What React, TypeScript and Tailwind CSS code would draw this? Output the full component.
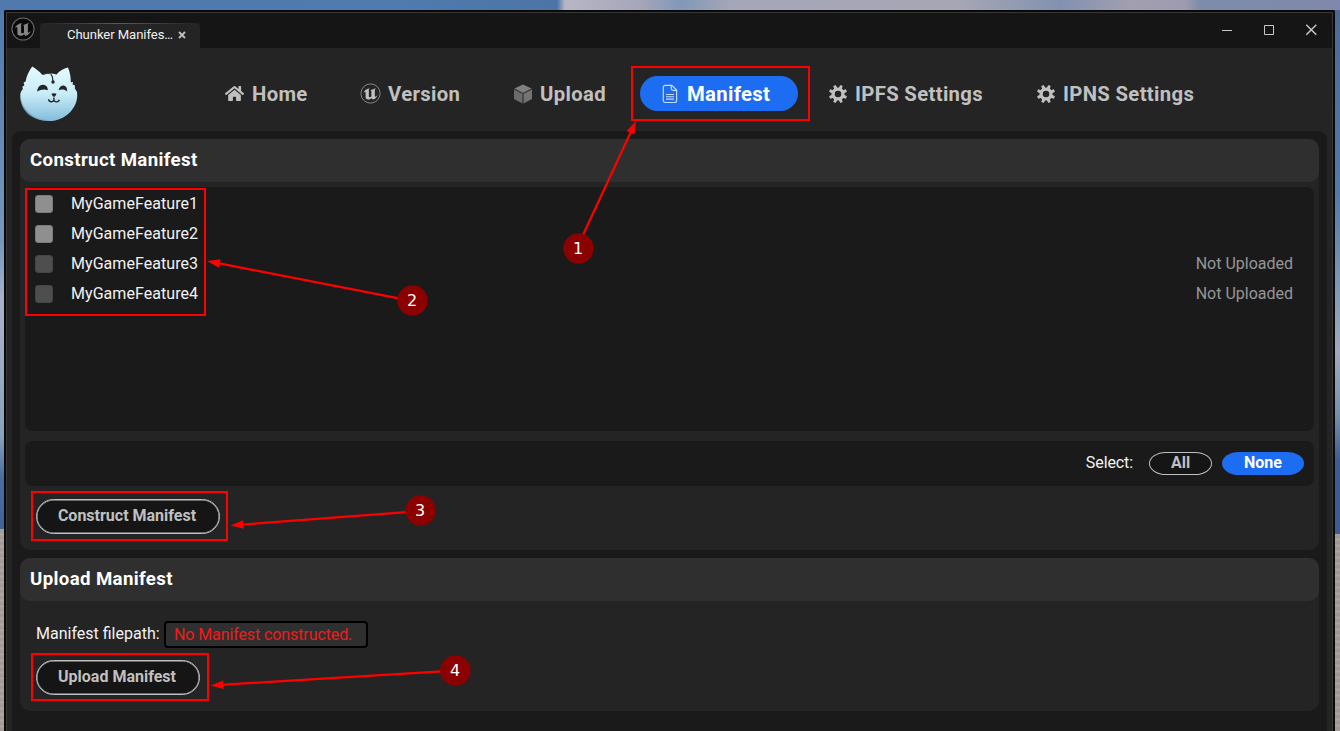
import type { ReactNode } from 'react';
import { FaHome } from 'react-icons/fa';

function EngineLogo({ size, dim }: { size: number; dim?: boolean }) {
  const c = dim ? '#858585' : '#c0c0c0';
  return (
    <svg width={size} height={size} viewBox="0 0 24 24" fill="none">
      <circle cx="12" cy="12" r="11" fill={dim ? '#080808' : 'none'} stroke={dim ? '#686868' : '#888888'} strokeWidth="1.1" />
      <path
        d="M3.8 11.6C4.8 8.8 7 6.9 10.8 6.1C10.3 6.7 10.1 7.2 10.1 7.9V15C10.1 15.8 10.4 16.3 11.1 16.3C11.7 16.3 12.4 16 13 15.4V9L12.1 8C14.4 7.6 16.4 6.8 18.2 5.6C17.4 6.6 16.9 7.3 16.9 8.2V14.7C16.9 15.5 17.2 15.8 17.8 15.6C18.7 15.3 19.4 14.6 20.2 13.6C19.2 16.3 17.4 18 14.8 18.9L13 17.3C11.8 18.5 10.7 18.9 9.4 18.8C7.4 18.6 6.2 17.6 6.4 16.2V10.9C6.4 10.1 6 9.9 5.3 10.2C4.8 10.5 4.2 11 3.8 11.6Z"
        fill={c}
      />
    </svg>
  );
}

function CatLogo() {
  return (
    <svg width="60" height="57" viewBox="0 0 60 57">
      <defs>
        <linearGradient id="fur" x1="0" y1="0" x2="0" y2="1">
          <stop offset="0" stopColor="#e6faff" />
          <stop offset="0.5" stopColor="#c8ecf7" />
          <stop offset="1" stopColor="#84bcdc" />
        </linearGradient>
      </defs>
      <path
        d="M13.2 1.5C17 3.5 20.5 6.5 23.5 10Q30.5 7.5 37.5 9.5C40.5 6 44.5 3.5 49 2.5C51.2 7.5 51.8 12.5 51.8 17.2L54 17L53.6 19.5L56 20.4L55.8 23.2L58 27C60.2 41 47.5 56 30.5 56C13 56 1 44 1.3 30C1.4 27.5 2 26 3.8 24.2L3.4 21.5L5.4 20.5L4.6 17.4L6.6 16.5C7.2 11.5 10 6 13.2 1.5Z"
        fill="url(#fur)"
      />
      <path d="M1.5 30C3 45 15 54.5 33 55.4C13 58 0 45 1.5 30Z" fill="#79aecb" opacity=".65" />
      <g fill="#202629">
        <path d="M18.2 26.6C18.4 22.4 21 19.6 24.2 19.8C27 20 28.8 22 28.9 25.2C25.6 23.8 21.6 24.2 18.2 26.6Z" />
        <path d="M39.6 25.2C40.2 22.2 42.4 20.3 44.8 20.6C47.2 21 48.2 23.2 48.2 26.4C45.6 24.4 42.6 24.2 39.6 25.2Z" />
        <path d="M32.4 28.8Q35 27.8 37.6 28.8Q36.6 31.4 35 32Q33.2 31.2 32.4 28.8Z" />
        <circle cx="34" cy="17" r="1.7" />
      </g>
      <path d="M32 9.2L33.4 12L34 17" fill="none" stroke="#252b2e" strokeWidth="1.2" />
      <path d="M24.5 9.1Q28 8.2 32 8.7" fill="none" stroke="#333b3e" strokeWidth=".8" />
      <path d="M29.4 34.4Q31.2 38.6 34.8 35.4Q38.4 38.6 40.4 34.8M34.9 32.6V35.4" fill="none" stroke="#202629" strokeWidth="1.4" />
    </svg>
  );
}

function CubeIcon() {
  return (
    <svg width="20" height="20" viewBox="0 0 20 20">
      <path d="M10 .5L18.5 4.5L10 8.9L1.5 4.5Z" fill="#808080" />
      <path d="M1 5.4L9.5 9.8V19.5L1 15Z" fill="#6c6c6c" />
      <path d="M19 5.4L10.5 9.8V19.5L19 15Z" fill="#747474" />
      <path d="M1 5L10 9.5L19 5M10 9.5V19.5" stroke="#484848" strokeWidth=".7" fill="none" />
    </svg>
  );
}

function DocumentIcon() {
  return (
    <svg width="16" height="20" viewBox="0 0 16 20" fill="none" stroke="#c8d9fb" strokeWidth="1.2">
      <path d="M3.3 1.3H9.8L14.6 6.1V16.5A2 2 0 0 1 12.6 18.5H3.3A2 2 0 0 1 1.3 16.5V3.3A2 2 0 0 1 3.3 1.3Z" />
      <path d="M9.3 1.5V4.6A1.8 1.8 0 0 0 11.1 6.4H14.4" />
      <path d="M4 10.5H12M4 12.8H12M4 15.1H12" strokeWidth="1.1" />
    </svg>
  );
}

function GearIcon() {
  return (
    <svg width="18" height="18" viewBox="0 0 18 18" fill="none" stroke="#c0c0c0">
      <circle cx="9" cy="9" r="4.9" strokeWidth="3.3" />
      {[22.5, 67.5, 112.5, 157.5, 202.5, 247.5, 292.5, 337.5].map((a) => (
        <path key={a} d="M7.3 3.4L7.7 -.1H10.3L10.7 3.4Z" fill="#c0c0c0" stroke="none" transform={`rotate(${a} 9 9)`} />
      ))}
    </svg>
  );
}

function NavItem({ icon, label, className }: { icon: ReactNode; label: string; className: string }) {
  return (
    <div className={`flex h-[35px] shrink-0 items-center whitespace-nowrap text-[20.3px] font-bold tracking-[0.34px] ${className}`}>
      <span className="flex w-[27px] shrink-0 items-center">{icon}</span>
      <div className="pt-[2px]">{label}</div>
    </div>
  );
}

function SectionTitle({ children }: { children: ReactNode }) {
  return (
    <h2 className="flex h-[43px] items-center rounded-[10px] bg-[#2f2f2f] px-[10px] pb-[2px] text-[18.67px] font-bold tracking-[0.36px] text-white">
      {children}
    </h2>
  );
}

function FeatureRow({ name, ready }: { name: string; ready: boolean }) {
  return (
    <div className="flex h-[30px] items-center pr-[21px] pl-[10px] text-base">
      <span
        className={`size-[18px] rounded-[3px] border ${
          ready ? 'border-[#7b7b7b] bg-[#8f8f8f]' : 'border-[#444444] bg-[#4e4e4e]'
        }`}
      />
      <span className="ml-[18px] pb-px tracking-[0.05px] text-[#f2f2f2]">{name}</span>
      {!ready && <span className="ml-auto pb-px text-[#969696]">Not Uploaded</span>}
    </div>
  );
}

const steps = [
  { n: 1, x: 578.5, y: 248.5, sx: 577, sy: 248, tx: 636, ty: 121 },
  { n: 2, x: 412.5, y: 300.5, sx: 412.5, sy: 301, tx: 207, ty: 261 },
  { n: 3, x: 420.5, y: 510.5, sx: 420.5, sy: 511, tx: 230.5, ty: 525.5 },
  { n: 4, x: 455.5, y: 670.5, sx: 455.5, sy: 670.5, tx: 210.5, ty: 685.5 },
];

function Annotations() {
  return (
    <div className="pointer-events-none absolute inset-0">
      <div className="absolute top-[66px] left-[631px] h-[55px] w-[179px] border-2 border-[#ff0000]" />
      <div className="absolute top-[188px] left-[25px] h-[128px] w-[181px] border-2 border-[#ff0000]" />
      <div className="absolute top-[491px] left-[31px] h-[50px] w-[197px] border-2 border-[#ff0000]" />
      <div className="absolute top-[653px] left-[31px] h-[48px] w-[178px] border-2 border-[#ff0000]" />
      <svg className="absolute inset-0" width="1340" height="731">
        {steps.map((s) => {
          const angle = (Math.atan2(s.ty - s.sy, s.tx - s.sx) * 180) / Math.PI;
          const length = Math.hypot(s.tx - s.sx, s.ty - s.sy);
          return (
            <g key={s.n} transform={`translate(${s.sx} ${s.sy}) rotate(${angle})`}>
              <path d={`M14 0H${length - 10}`} stroke="#ff0000" strokeWidth="2.2" />
              <path d={`M${length} 0l-13 -4.3v8.6z`} fill="#ff0000" />
            </g>
          );
        })}
        {steps.map((s) => (
          <g key={s.n}>
            <circle cx={s.x} cy={s.y} r="15.2" fill="#8b0000" />
            <text x={s.x - 0.5} y={s.y + 5.5} textAnchor="middle" fill="#ffffff" className="font-['DejaVu_Sans',sans-serif] text-[16px]">
              {s.n}
            </text>
          </g>
        ))}
      </svg>
    </div>
  );
}

export default function App() {
  return (
    <div className="relative h-[731px] w-[1340px] overflow-hidden bg-[linear-gradient(90deg,#5079ad_0px,#4f7bae_400px,#4d74a6_557px,#b7b6c5_565px,#a6a6ba_640px,#8198b8_680px,#a5a6b8_730px,#a7a6b5_960px,#8192b0_1060px,#a29fb0_1130px,#9e9bb0_1185px,#7d8cab_1200px,#8089a9_1340px)] pt-[10px] font-[Roboto,sans-serif]">
      <div className="absolute top-[10px] left-0 h-[519px] w-[5px] bg-[linear-gradient(#5179ad_0%,#7897bb_45%,#aab2c9_56%,#8ba2bb_82%,#496e9e_90%,#426394_100%)]" />
      <div className="absolute top-[10px] right-0 h-[524px] w-[6px] bg-[linear-gradient(#4c6995_0%,#507ba8_35%,#9faabd_65%,#7690ad_77%,#3c5d92_86%,#3c5d92_100%)]" />
      <div className="absolute top-[529px] left-0 h-[202px] w-[5px] bg-[repeating-linear-gradient(#aaa29f_0px,#a09896_3px,#b1aaa6_6px)]" />
      <div className="absolute top-[534px] right-0 h-[197px] w-[6px] bg-[repeating-linear-gradient(#a89f9b_0px,#9a9390_3px,#b0a8a4_6px)]" />

      <div className="relative ml-1 h-[721px] w-[1331px] rounded-t-[2px] border-x-2 border-t-2 border-[#090909]">
        <div className="h-full border-x border-t border-[#373737] bg-[#242424]">
          <div className="flex h-[35px] bg-[#151515]">
            <div className="flex w-[33px] items-start pt-1 pl-1">
              <EngineLogo size={24} dim />
            </div>
            <div className="relative mt-[10px] flex w-[160px] items-center rounded-t-[4px] bg-[#242424] pl-[27px] text-[13.1px] text-[#f0f0f0]">
              <span className="absolute top-0 left-1 h-px w-[152px] bg-[linear-gradient(90deg,transparent,#0070e0_50%,transparent)]" />
              <span className="w-[106px] whitespace-nowrap pb-[2px] tracking-[-0.07px]">Chunker Manifes…</span>
              <svg className="mt-[-2px] ml-[5px]" width="8" height="8" viewBox="0 0 8 8" stroke="#c0c0c0" strokeWidth="1.8">
                <path d="M1 1L7 7M7 1L1 7" />
              </svg>
            </div>
            <div className="mr-[14px] mb-[2px] ml-auto flex items-center gap-[31px]">
              <svg width="11" height="11" stroke="#c8c8c8"><path d="M0 6.5H10" /></svg>
              <svg width="11" height="11" fill="none" stroke="#c8c8c8"><path d="M.5 1.5H9.5V10.5H.5Z" /></svg>
              <svg width="12" height="12" stroke="#c8c8c8" strokeWidth="1.4"><path d="M.3 .8L10.3 10.8M10.3 .8L.3 10.8" /></svg>
            </div>
          </div>

          <nav className="flex h-[83px] items-start pt-[28px] pl-3 text-[#c0c0c0]">
            <div className="-mt-[11px] w-[206px] shrink-0">
              <CatLogo />
            </div>
            <NavItem className="w-[135px]" icon={<FaHome size={19} />} label="Home" />
            <NavItem className="w-[153px] [&>span]:w-[28px]" icon={<EngineLogo size={21} />} label="Version" />
            <NavItem className="w-[127px]" icon={<CubeIcon />} label="Upload" />
            <NavItem className="w-[158px] rounded-full bg-[#1c6df2] pl-[22px] text-white [&>span]:w-[25px]" icon={<DocumentIcon />} label="Manifest" />
            <NavItem className="ml-[31px] w-[208px] [&>span]:w-[26px]" icon={<GearIcon />} label="IPFS Settings" />
            <NavItem className="[&>span]:w-[26px]" icon={<GearIcon />} label="IPNS Settings" />
          </nav>

          <main className="mr-[5px] ml-[5px] flex h-[600px] flex-col gap-2 rounded-t-[9px] bg-[#1a1a1a] p-2">
            <section className="h-[411px] rounded-[10px] bg-[#242424]">
              <SectionTitle>Construct Manifest</SectionTitle>
              <div className="mx-[5px] mt-[5px] h-[244px] rounded-[8px] bg-[#1a1a1a] pt-[2px]">
                <FeatureRow name="MyGameFeature1" ready />
                <FeatureRow name="MyGameFeature2" ready />
                <FeatureRow name="MyGameFeature3" ready={false} />
                <FeatureRow name="MyGameFeature4" ready={false} />
              </div>
              <div className="mx-[5px] mt-[10px] flex h-[45px] items-center justify-end rounded-[8px] bg-[#1a1a1a] pr-[10px] text-base text-[#f2f2f2]">
                <span className="pb-[2px] tracking-[-0.1px]">Select:</span>
                <button className="-mt-px ml-4 h-[23px] w-[63px] rounded-[17px/50%] border border-[#c0c0c0] bg-[#151515] font-bold text-[#c0c0c0]">
                  <span className="block -translate-y-px leading-[21px]">All</span>
                </button>
                <button className="-mt-px ml-[10px] h-[23px] w-[82px] rounded-[17px/50%] bg-[#1c6df2] font-bold text-white">
                  <span className="block -translate-y-px leading-[21px]">None</span>
                </button>
              </div>
              <button className="mt-[13px] ml-4 h-[35px] w-[184px] rounded-full border border-[#c0c0c0] bg-[#151515] pr-[2px] pb-[2px] text-base font-bold text-[#c0c0c0] shadow-[inset_0_0_0_0.5px_#c0c0c0]">
                Construct Manifest
              </button>
            </section>

            <section className="h-[153px] rounded-[10px] bg-[#242424]">
              <SectionTitle>Upload Manifest</SectionTitle>
              <div className="mt-5 ml-4 flex h-[27px] items-center text-base text-[#f2f2f2]">
                <span className="w-[128px] pb-[2px]">Manifest filepath:</span>
                <div className="flex h-[27px] w-[204px] items-center rounded-[4px] border-2 border-black bg-[#2f2f2f] pl-2 tracking-[-0.1px] text-[#ee1c1c]">
                  No Manifest constructed.
                </div>
              </div>
              <button className="mt-[12px] ml-4 h-[35px] w-[164px] rounded-full border border-[#c0c0c0] bg-[#151515] pr-[2px] pb-[2px] text-base font-bold text-[#c0c0c0] shadow-[inset_0_0_0_0.5px_#c0c0c0]">
                Upload Manifest
              </button>
            </section>
          </main>
        </div>
      </div>
      <Annotations />
    </div>
  );
}
